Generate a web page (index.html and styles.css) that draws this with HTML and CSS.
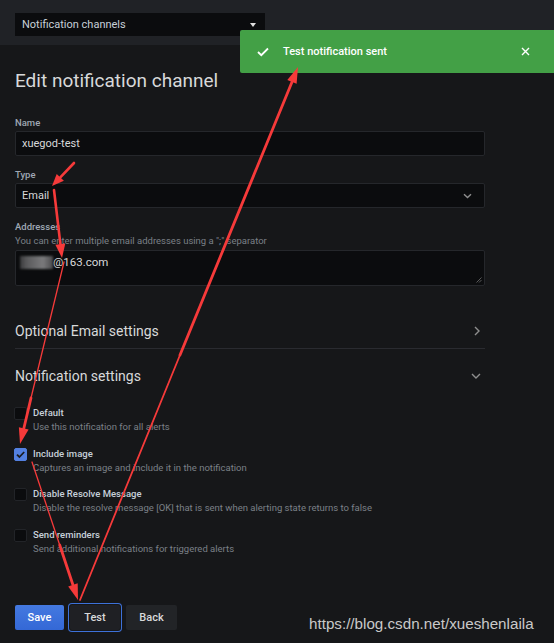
FILE: index.html
```html
<!DOCTYPE html>
<html>
<head>
<meta charset="utf-8">
<link rel="stylesheet" href="styles.css">
</head>
<body>
<div class="topbar">
  <div class="picker">
    <span>Notification channels</span>
    <span class="caret"></span>
  </div>
</div>

<main class="content">
  <h1 class="title">Edit notification channel</h1>

  <div class="field">
    <div class="label">Name</div>
    <div class="input">xuegod-test</div>
  </div>

  <div class="field">
    <div class="label">Type</div>
    <div class="input select">
      <span>Email</span>
      <svg class="chev" width="9" height="6" viewBox="0 0 9 6"><path d="M1 1.2 L4.5 4.6 L8 1.2" fill="none" stroke="#8e8e8e" stroke-width="1.4"/></svg>
    </div>
  </div>

  <div class="field">
    <div class="label">Addresses</div>
    <div class="desc">You can enter multiple email addresses using a ";" separator</div>
    <div class="input textarea"><span class="redact"></span><span>@163.com</span>
      <svg class="grip" width="6" height="6" viewBox="0 0 6 6"><path d="M0.5 5.5 L5.5 0.5 M3 5.5 L5.5 3" stroke="#6e6e6e" stroke-width="0.8"/></svg>
    </div>
  </div>

  <div class="section-head first">
    <span>Optional Email settings</span>
    <svg width="8" height="10" viewBox="0 0 8 10"><path d="M2 1 L6 5 L2 9" fill="none" stroke="#8e8e8e" stroke-width="1.4"/></svg>
  </div>
  <div class="divider"></div>
  <div class="section-head second">
    <span>Notification settings</span>
    <svg width="10" height="8" viewBox="0 0 10 8"><path d="M1 2 L5 6 L9 2" fill="none" stroke="#8e8e8e" stroke-width="1.4"/></svg>
  </div>

  <div class="checks">
    <div class="check-row">
      <span class="box"></span>
      <div>
        <div class="check-label">Default</div>
        <div class="check-desc">Use this notification for all alerts</div>
      </div>
    </div>
    <div class="check-row">
      <span class="box checked"><svg width="13" height="13" viewBox="0 0 13 13"><path d="M3 6.6 L5.4 9 L10.2 4" fill="none" stroke="#1b1c20" stroke-width="1.8"/></svg></span>
      <div>
        <div class="check-label">Include image</div>
        <div class="check-desc">Captures an image and include it in the notification</div>
      </div>
    </div>
    <div class="check-row">
      <span class="box"></span>
      <div>
        <div class="check-label">Disable Resolve Message</div>
        <div class="check-desc">Disable the resolve message [OK] that is sent when alerting state returns to false</div>
      </div>
    </div>
    <div class="check-row">
      <span class="box"></span>
      <div>
        <div class="check-label">Send reminders</div>
        <div class="check-desc">Send additional notifications for triggered alerts</div>
      </div>
    </div>
  </div>

  <div class="actions">
    <button class="btn primary">Save</button>
    <button class="btn secondary focused">Test</button>
    <button class="btn secondary">Back</button>
  </div>
</main>

<div class="toast">
  <svg class="toast-check" width="12" height="10" viewBox="0 0 12 10"><path d="M1 5 L4.3 8.2 L11 1.5" fill="none" stroke="#fff" stroke-width="1.8"/></svg>
  <span class="toast-text">Test notification sent</span>
  <svg class="toast-close" width="9" height="9" viewBox="0 0 9 9"><path d="M1 1 L8 8 M8 1 L1 8" stroke="#fff" stroke-width="1.4"/></svg>
</div>

<svg class="annotations" width="554" height="643" viewBox="0 0 554 643">
  <g stroke="#f63a3a" stroke-linecap="round" fill="none">
    <line x1="80" y1="600" x2="180" y2="355" stroke-width="1.8"/>
    <line x1="180" y1="355" x2="292" y2="82" stroke-width="2.8"/>
    <line x1="74" y1="163" x2="60.3" y2="177.3" stroke-width="2.6"/>
    <line x1="54" y1="190" x2="60.4" y2="244" stroke-width="2.6"/>
    <line x1="64" y1="262" x2="31" y2="398" stroke-width="1.3"/>
    <line x1="31" y1="398" x2="23.8" y2="428.5" stroke-width="2.8"/>
    <line x1="32" y1="462" x2="59.7" y2="545" stroke-width="1.3"/>
    <line x1="59.7" y1="545" x2="72.9" y2="584.8" stroke-width="2.8"/>
  </g>
  <g fill="#f63a3a">
    <polygon points="298,67 296.6,83.7 287.3,79.9"/>
    <polygon points="52,186 63.9,180.8 56.7,173.9"/>
    <polygon points="62,258 55.4,244.7 65.3,243.5"/>
    <polygon points="20,444 18.9,427.3 28.6,429.6"/>
    <polygon points="78,600 68.2,586.4 77.7,583.3"/>
  </g>
</svg>

<div class="watermark">https://blog.csdn.net/xueshenlaila</div>
</body>
</html>
```

FILE: styles.css
```css
html, body {
  margin: 0;
  padding: 0;
}
body {
  width: 554px;
  height: 643px;
  overflow: hidden;
  position: relative;
  background: #161719;
  color: #d8d9da;
  font-family: Roboto, "Liberation Sans", sans-serif;
}

.topbar {
  height: 45px;
  box-sizing: border-box;
  padding: 13px 15px 0;
  background: #202226;
}
.picker {
  width: 250px;
  height: 23px;
  box-sizing: border-box;
  background: #0b0c0e;
  display: flex;
  align-items: center;
  justify-content: space-between;
  padding: 0 9px 0 7px;
  font-size: 11px;
  color: #c7d0d9;
}
.caret {
  width: 0;
  height: 0;
  border-left: 3.5px solid transparent;
  border-right: 3.5px solid transparent;
  border-top: 4px solid #e0e0e0;
  margin-top: 1px;
}

.content {
  width: 470px;
  padding: 0 15px;
}

.title {
  margin: 24px 0 0;
  font-size: 19px;
  line-height: 24px;
  font-weight: 400;
  color: #d8d9da;
}

.field {
  margin-top: 13px;
}
.field:first-of-type {
  margin-top: 24px;
}
.label {
  font-size: 9.5px;
  line-height: 12px;
  font-weight: 500;
  color: #9fa7b3;
  margin-bottom: 2px;
}
.desc {
  font-size: 9.5px;
  line-height: 12px;
  color: #7b8087;
  margin-bottom: 3px;
}
.input {
  height: 25px;
  box-sizing: border-box;
  background: #0b0c0e;
  border: 1px solid #25272b;
  border-radius: 2px;
  display: flex;
  align-items: center;
  padding: 0 12px 0 6px;
  font-size: 11px;
  color: #d8d9da;
}
.select {
  justify-content: space-between;
}
.textarea {
  height: 36px;
  align-items: flex-start;
  padding-top: 4px;
  position: relative;
  font-size: 11.5px;
}
.redact {
  display: inline-block;
  width: 33px;
  height: 13px;
  margin-left: -2px;
  margin-top: 1px;
  background: linear-gradient(90deg, #3a3a3c 0%, #59595b 20%, #6a6a6c 45%, #7a7a7c 70%, #4a4a4c 100%);
  filter: blur(1px);
}
.grip {
  position: absolute;
  right: 2px;
  bottom: 2px;
}

.section-head {
  height: 20px;
  display: flex;
  align-items: center;
  justify-content: space-between;
  font-size: 14px;
  color: #d8d9da;
  padding-right: 4px;
}
.section-head.first {
  margin-top: 35px;
}
.divider {
  height: 1px;
  background: #2a2b30;
  margin-top: 7px;
}
.section-head.second {
  margin-top: 17px;
}

.checks {
  margin-top: 21px;
  display: flex;
  flex-direction: column;
  gap: 14.5px;
}
.check-row {
  display: flex;
  gap: 6px;
  height: 26px;
}
.box {
  width: 13px;
  height: 13px;
  box-sizing: border-box;
  background: #0b0c0e;
  border: 1px solid #222428;
  border-radius: 2px;
  flex: none;
  margin-left: -1px;
}
.box.checked {
  background: #5380e0;
  border-color: #5380e0;
  position: relative;
}
.box.checked svg {
  position: absolute;
  left: -1px;
  top: -1px;
}
.check-label {
  font-size: 9.5px;
  line-height: 12px;
  font-weight: 500;
  color: #c7d0d9;
}
.check-desc {
  font-size: 9.5px;
  line-height: 12px;
  color: #7b8087;
  margin-top: 2px;
  white-space: nowrap;
}

.actions {
  margin-top: 50px;
  display: flex;
  gap: 6px;
}
.btn {
  height: 25px;
  box-sizing: border-box;
  border: none;
  border-radius: 2px;
  font-family: Roboto, "Liberation Sans", sans-serif;
  font-size: 11px;
  font-weight: 500;
  padding: 0;
  color: #d8d9da;
}
.primary {
  width: 49px;
  background: linear-gradient(180deg, #4479e0, #3468d6);
  color: #fff;
}
.secondary {
  width: 51px;
  background: #222427;
}
.focused {
  width: 50px;
  box-shadow: 0 0 0 1px #161719, 0 0 0 2px #3d71d9;
  background: #1f2024;
}

.toast {
  position: absolute;
  left: 240px;
  top: 30px;
  width: 322px;
  height: 43px;
  box-sizing: border-box;
  background: #43a046;
  border-radius: 2px;
  display: flex;
  align-items: center;
  padding-left: 17px;
  color: #fff;
}
.toast-check {
  flex: none;
}
.toast-text {
  margin-left: 14px;
  font-size: 11px;
  font-weight: 500;
}
.toast-close {
  margin-left: auto;
  margin-right: 32px;
}

.annotations {
  position: absolute;
  left: 0;
  top: 0;
  pointer-events: none;
}

.watermark {
  position: absolute;
  left: 309px;
  top: 615px;
  font-family: "Liberation Sans", Arial, sans-serif;
  font-size: 15.2px;
  color: #c9c9c9;
  white-space: nowrap;
}
```
